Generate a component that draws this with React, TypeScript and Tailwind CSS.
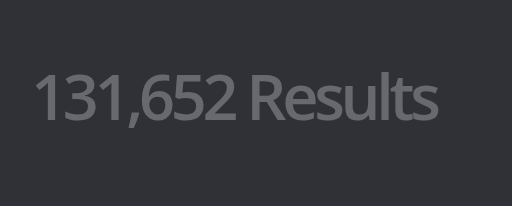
export default function App() {
  return (
    <div className="w-[512px] h-[206px] bg-[#303136] flex items-start px-[31px] pt-[64px]">
      <h2
        className="text-[63px] leading-none font-semibold text-[#68696e] tracking-[-4.3px] whitespace-nowrap blur-[0.6px]"
        style={{ fontFamily: '"Open Sans", "Noto Sans", sans-serif' }}
      >
        131,652 Results
      </h2>
    </div>
  );
}
